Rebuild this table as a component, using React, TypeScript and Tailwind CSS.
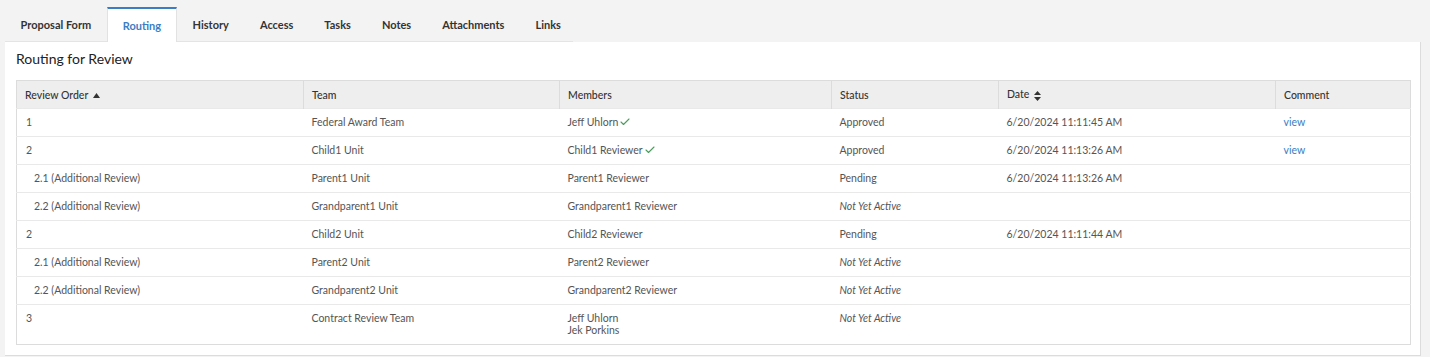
import { Check } from "lucide-react";

const tabs = ["Proposal Form", "Routing", "History", "Access", "Tasks", "Notes", "Attachments", "Links"];

type Row = {
  order: string;
  sub?: boolean;
  team: string;
  members: { name: string; ok?: boolean }[];
  status: string;
  pending?: boolean;
  date?: string;
  comment?: boolean;
};

const rows: Row[] = [
  { order: "1", team: "Federal Award Team", members: [{ name: "Jeff Uhlorn", ok: true }], status: "Approved", date: "6/20/2024 11:11:45 AM", comment: true },
  { order: "2", team: "Child1 Unit", members: [{ name: "Child1 Reviewer", ok: true }], status: "Approved", date: "6/20/2024 11:13:26 AM", comment: true },
  { order: "2.1 (Additional Review)", sub: true, team: "Parent1 Unit", members: [{ name: "Parent1 Reviewer" }], status: "Pending", date: "6/20/2024 11:13:26 AM" },
  { order: "2.2 (Additional Review)", sub: true, team: "Grandparent1 Unit", members: [{ name: "Grandparent1 Reviewer" }], status: "Not Yet Active", pending: true },
  { order: "2", team: "Child2 Unit", members: [{ name: "Child2 Reviewer" }], status: "Pending", date: "6/20/2024 11:11:44 AM" },
  { order: "2.1 (Additional Review)", sub: true, team: "Parent2 Unit", members: [{ name: "Parent2 Reviewer" }], status: "Not Yet Active", pending: true },
  { order: "2.2 (Additional Review)", sub: true, team: "Grandparent2 Unit", members: [{ name: "Grandparent2 Reviewer" }], status: "Not Yet Active", pending: true },
  { order: "3", team: "Contract Review Team", members: [{ name: "Jeff Uhlorn" }, { name: "Jek Porkins" }], status: "Not Yet Active", pending: true },
];

function SortUp() {
  return (
    <svg width="7" height="5" viewBox="0 0 7 5" className="ml-[5px] inline-block">
      <path d="M0 5 L3.5 0 L7 5 Z" fill="#333" />
    </svg>
  );
}

function SortBoth() {
  return (
    <svg width="7" height="10" viewBox="0 0 7 10" className="ml-[5px] inline-block">
      <path d="M0 4 L3.5 0 L7 4 Z" fill="#333" />
      <path d="M0 6 L3.5 10 L7 6 Z" fill="#333" />
    </svg>
  );
}

export default function App() {
  return (
    <main className="min-h-[357px] w-[1430px] bg-[#f3f3f3] pt-[7px] font-['Lato','Open_Sans',sans-serif]">
      {/* Tab strip */}
      <div className="ml-[5px] flex h-[35px] w-[568px] border-b border-[#e4e4e4]">
        {tabs.map((t) =>
          t === "Routing" ? (
            <div
              key={t}
              className="-mb-px flex h-[35px] shrink-0 items-center whitespace-nowrap border-x border-t-2 border-x-[#e2e2e2] border-t-[#3b7dc4] bg-white px-[15px] pt-[2px] text-[11px] font-bold text-[#3b7dc4]"
            >
              {t}
            </div>
          ) : (
            <div key={t} className="flex h-[34px] shrink-0 items-center whitespace-nowrap px-[15.5px] pt-[3px] text-[11px] font-bold text-[#333]">
              {t}
            </div>
          )
        )}
      </div>

      {/* Panel */}
      <div className="ml-[5px] w-[1416px] border-r border-b border-[#dcdcdc] bg-white px-[11px] pt-[6px] pb-[10px]">
        <h2 className="mb-[11px] h-[21px] text-[14px] leading-[21px] text-[#222]">Routing for Review</h2>

        <table className="w-[1394px] table-fixed border-collapse border border-[#dcdcdc] text-[10.5px] leading-[12px] text-[#555]">
          <colgroup>
            <col className="w-[287px]" />
            <col className="w-[256px]" />
            <col className="w-[272px]" />
            <col className="w-[167px]" />
            <col className="w-[277px]" />
            <col className="w-[135px]" />
          </colgroup>
          <thead>
            <tr className="h-[28px] bg-[#eeeeee] text-left text-[#333]">
              <th className="border-r border-[#dcdcdc] pl-[8px] font-medium">
                Review Order
                <SortUp />
              </th>
              <th className="border-r border-[#dcdcdc] pl-[8px] font-medium">Team</th>
              <th className="border-r border-[#dcdcdc] pl-[8px] font-medium">Members</th>
              <th className="border-r border-[#dcdcdc] pl-[8px] font-medium">Status</th>
              <th className="border-r border-[#dcdcdc] pl-[8px] font-medium">
                Date
                <SortBoth />
              </th>
              <th className="pl-[8px] font-medium">Comment</th>
            </tr>
          </thead>
          <tbody>
            {rows.map((r, i) => (
              <tr
                key={i}
                className={`border-t border-[#e9e9e9] align-top ${r.members.length > 1 ? "h-[40px]" : "h-[28px]"}`}
              >
                <td className={`pt-[7px] ${r.sub ? "pl-[17px]" : "pl-[9px]"}`}>{r.order}</td>
                <td className="pl-[8px] pt-[7px]">{r.team}</td>
                <td className="pl-[8px] pt-[7px]">
                  {r.members.map((m) => (
                    <div key={m.name} className="flex h-[12px] items-center">
                      {m.name}
                      {m.ok && <Check size={12} strokeWidth={2.2} className="ml-[1px] text-[#4a9e5c]" />}
                    </div>
                  ))}
                </td>
                <td className={`pl-[8px] pt-[7px] ${r.pending ? "italic" : ""}`}>{r.status}</td>
                <td className="pl-[8px] pt-[7px]">{r.date}</td>
                <td className="pl-[8px] pt-[7px]">
                  {r.comment && <span className="text-[#3b7dc4]">view</span>}
                </td>
              </tr>
            ))}
          </tbody>
        </table>
      </div>
    </main>
  );
}
